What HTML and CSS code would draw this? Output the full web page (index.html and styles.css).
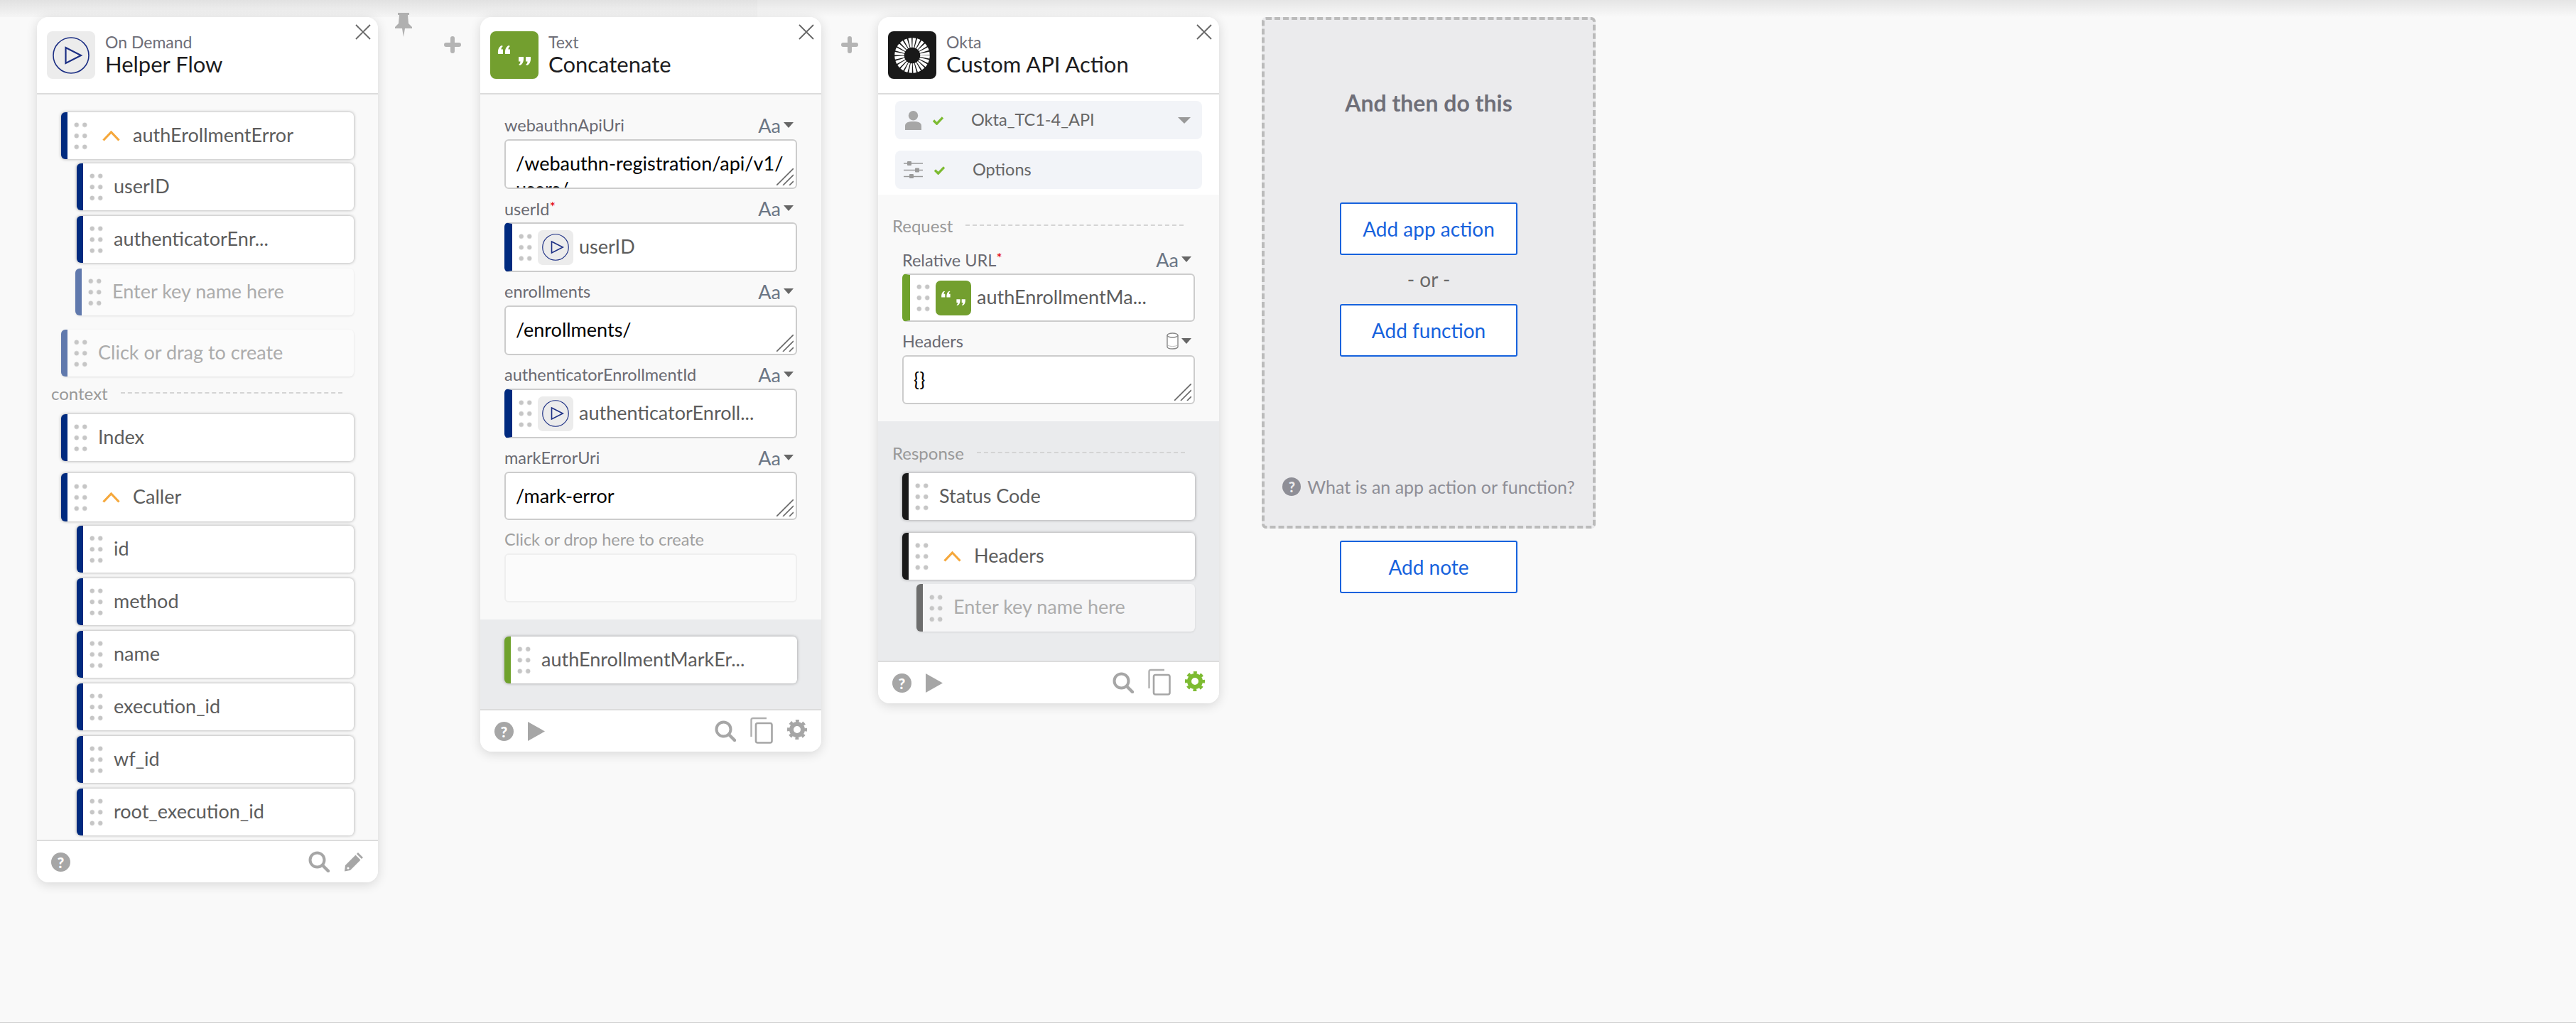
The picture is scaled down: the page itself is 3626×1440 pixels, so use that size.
FILE: index.html
```html
<!DOCTYPE html>
<html lang="en">
<head>
  <meta charset="UTF-8">
  <title>Flow Builder</title>
  <link rel="stylesheet" href="styles.css">
</head>
<body>
  <svg class="defs" width="0" height="0">
    <symbol id="i-play" viewBox="0 0 52 52">
      <circle cx="26" cy="26" r="25" fill="none" stroke="#1c2f84" stroke-width="1.6"/>
      <path d="M18.5 15 L40 26 L18.5 37 Z" fill="none" stroke="#1c2f84" stroke-width="2.2"/>
    </symbol>
    <symbol id="i-quote" viewBox="0 0 68 67">
      <path d="M16 20 C12 22 10.500 26 11 32 L18 32 L18 25.500 L15.500 25.500 C15.500 23.500 16.500 22 18 21 Z M26 20 C22 22 20.500 26 21 32 L28 32 L28 25.500 L25.500 25.500 C25.500 23.500 26.500 22 28 21 Z" fill="#fff"/>
      <path d="M46 48 C50 46 51.500 42 51 36 L44 36 L44 42.500 L46.500 42.500 C46.500 44.500 45.500 46 44 47 Z M56 48 C60 46 61.500 42 61 36 L54 36 L54 42.500 L56.500 42.500 C56.500 44.500 55.500 46 54 47 Z" fill="#fff" transform="translate(-4 0)"/>
    </symbol>
    <symbol id="i-close" viewBox="0 0 22 22">
      <path d="M1 1 L21 21 M21 1 L1 21" stroke="#666" stroke-width="1.8" fill="none"/>
    </symbol>
    <symbol id="i-plus" viewBox="0 0 24 24">
      <path d="M12 3 V21 M3 12 H21" stroke="#b4b4b4" stroke-width="6" stroke-linecap="round" fill="none"/>
    </symbol>
    <symbol id="i-pin" viewBox="0 0 24 34">
      <path d="M4 0 H20 V3 H18 L19 15 L24 20 V22 H14 L12 34 L10 22 H0 V20 L5 15 L6 3 H4 Z" fill="#b0b0b0"/>
    </symbol>
    <symbol id="i-search" viewBox="0 0 30 30">
      <circle cx="12.500" cy="12.500" r="10" fill="none" stroke="#a6a6a6" stroke-width="4"/>
      <path d="M20 20 L28 28" stroke="#a6a6a6" stroke-width="4.500" stroke-linecap="round"/>
    </symbol>
    <symbol id="i-pencil" viewBox="0 0 28 28">
      <path d="M20 1 L27 8 L25 10 L18 3 Z M16.500 4.500 L23.500 11.500 L9 26 L1 27.500 L2 19 Z" fill="#a6a6a6"/>
      <circle cx="6" cy="23" r="1.600" fill="#fff"/>
    </symbol>
    <symbol id="i-copy" viewBox="0 0 32 38">
      <path d="M23 2 H4 Q1.500 2 1.500 4.500 V28" fill="none" stroke="#b0b0b0" stroke-width="2.400"/>
      <rect x="8" y="9" width="22.500" height="27.500" rx="2.500" fill="#fff" stroke="#a6a6a6" stroke-width="2.600"/>
    </symbol>
    <symbol id="i-gear" viewBox="0 0 28 28">
      <circle cx="14" cy="14" r="8" fill="none" stroke="currentColor" stroke-width="6"/>
      <circle cx="14" cy="14" r="11.500" fill="none" stroke="currentColor" stroke-width="5" stroke-dasharray="4.600 4.430" stroke-dashoffset="2.300"/>
    </symbol>
    <symbol id="i-person" viewBox="0 0 24 28">
      <circle cx="12" cy="7" r="7" fill="#a6a6a6"/>
      <path d="M0 28 V22 C0 17 5 15.500 12 15.500 C19 15.500 24 17 24 22 V28 Z" fill="#a6a6a6"/>
    </symbol>
    <symbol id="i-check" viewBox="0 0 18 14">
      <path d="M2 7 L7 12 L16 2.500" fill="none" stroke="#7dbb32" stroke-width="3.600"/>
    </symbol>
    <symbol id="i-sliders" viewBox="0 0 27 24">
      <path d="M0 3 H27 M0 12.500 H27 M0 21.500 H27" stroke="#9a9a9a" stroke-width="1.400"/>
      <rect x="5" y="0" width="6" height="6" rx="1" fill="#9a9a9a"/>
      <rect x="16" y="9.500" width="6" height="6" rx="1" fill="#9a9a9a"/>
      <rect x="8" y="18" width="6" height="6" rx="1" fill="#9a9a9a"/>
    </symbol>
    <symbol id="i-db" viewBox="0 0 17 24">
      <path d="M1 4 V20 C1 24 16 24 16 20 V4" fill="#fff" stroke="#888" stroke-width="1.400"/>
      <ellipse cx="8.500" cy="4" rx="7.500" ry="3" fill="#fff" stroke="#888" stroke-width="1.400"/>
      <path d="M2 18 C4 20 13 20 15 18" fill="none" stroke="#bbb"/>
    </symbol>
    <symbol id="i-resize" viewBox="0 0 24 24">
      <path d="M0 24 L24 0 M9 24 L24 9 M18 24 L24 18" stroke="#666" stroke-width="1.600" fill="none"/>
    </symbol>
    <symbol id="i-chevron" viewBox="0 0 25 15">
      <path d="M1.500 13.500 L12.500 2 L23.500 13.500" fill="none" stroke="#f5a83c" stroke-width="3.200"/>
    </symbol>
  </svg>

  <main class="canvas">
    <!-- trigger card -->
    <section class="card">
      <header class="card-head">
        <span class="app-icon app-icon-flow"><svg class="play-big"><use href="#i-play"/></svg></span>
        <div class="card-titles">
          <div class="card-app">On Demand</div>
          <div class="card-name">Helper Flow</div>
        </div>
        <svg class="close"><use href="#i-close"/></svg>
      </header>
      <div class="card-body flow-body">
        <div class="pill parent"><span class="grip"></span><svg class="chevron"><use href="#i-chevron"/></svg><span class="val">authErollmentError</span></div>
        <div class="pill sub"><span class="grip"></span><span class="val">userID</span></div>
        <div class="pill sub"><span class="grip"></span><span class="val">authenticatorEnr...</span></div>
        <div class="pill sub ghost"><span class="grip"></span><span class="val">Enter key name here</span></div>
        <div class="pill ghost create"><span class="grip"></span><span class="val">Click or drag to create</span></div>
        <div class="divider context"><span>context</span><i></i></div>
        <div class="pill"><span class="grip"></span><span class="val">Index</span></div>
        <div class="pill parent caller"><span class="grip"></span><svg class="chevron"><use href="#i-chevron"/></svg><span class="val">Caller</span></div>
        <div class="pill sub"><span class="grip"></span><span class="val">id</span></div>
        <div class="pill sub"><span class="grip"></span><span class="val">method</span></div>
        <div class="pill sub"><span class="grip"></span><span class="val">name</span></div>
        <div class="pill sub"><span class="grip"></span><span class="val">execution_id</span></div>
        <div class="pill sub"><span class="grip"></span><span class="val">wf_id</span></div>
        <div class="pill sub"><span class="grip"></span><span class="val">root_execution_id</span></div>
      </div>
      <footer class="card-foot">
        <span class="help">?</span>
        <span class="spacer"></span>
        <svg class="tool"><use href="#i-search"/></svg>
        <svg class="tool pencil"><use href="#i-pencil"/></svg>
      </footer>
    </section>

    <div class="gutter gutter-first">
      <svg class="pin"><use href="#i-pin"/></svg>
      <svg class="plus plus-first"><use href="#i-plus"/></svg>
    </div>

    <!-- text function card -->
    <section class="card">
      <header class="card-head">
        <span class="app-icon app-icon-text"><svg class="quote-big"><use href="#i-quote"/></svg></span>
        <div class="card-titles">
          <div class="card-app">Text</div>
          <div class="card-name">Concatenate</div>
        </div>
        <svg class="close"><use href="#i-close"/></svg>
      </header>
      <div class="card-body inputs">
        <div class="field">
          <div class="field-label"><span>webauthnApiUri</span><span class="type">Aa<b class="caret"></b></span></div>
          <div class="textbox">/webauthn-registration/api/v1/ users/<svg class="resize"><use href="#i-resize"/></svg></div>
        </div>
        <div class="field">
          <div class="field-label"><span>userId<em>*</em></span><span class="type">Aa<b class="caret"></b></span></div>
          <div class="slot"><span class="grip"></span><span class="mini-icon"><svg class="play-small"><use href="#i-play"/></svg></span><span class="val">userID</span></div>
        </div>
        <div class="field">
          <div class="field-label"><span>enrollments</span><span class="type">Aa<b class="caret"></b></span></div>
          <div class="textbox">/enrollments/<svg class="resize"><use href="#i-resize"/></svg></div>
        </div>
        <div class="field">
          <div class="field-label"><span>authenticatorEnrollmentId</span><span class="type">Aa<b class="caret"></b></span></div>
          <div class="slot"><span class="grip"></span><span class="mini-icon"><svg class="play-small"><use href="#i-play"/></svg></span><span class="val">authenticatorEnroll...</span></div>
        </div>
        <div class="field">
          <div class="field-label"><span>markErrorUri</span><span class="type">Aa<b class="caret"></b></span></div>
          <div class="textbox textbox-short">/mark-error<svg class="resize"><use href="#i-resize"/></svg></div>
        </div>
        <div class="field-label drop-label"><span>Click or drop here to create</span></div>
        <div class="dropbox"></div>
      </div>
      <div class="outputs">
        <div class="pill green"><span class="grip"></span><span class="val">authEnrollmentMarkEr...</span></div>
      </div>
      <footer class="card-foot">
        <span class="help">?</span>
        <svg class="run"><path d="M0 0 L24 13.500 L0 27 Z" fill="#a6a6a6"/></svg>
        <span class="spacer"></span>
        <svg class="tool"><use href="#i-search"/></svg>
        <svg class="tool copy"><use href="#i-copy"/></svg>
        <svg class="tool gear"><use href="#i-gear"/></svg>
      </footer>
    </section>

    <div class="gutter gutter-second">
      <svg class="plus"><use href="#i-plus"/></svg>
    </div>

    <!-- okta action card -->
    <section class="card">
      <header class="card-head">
        <span class="app-icon app-icon-okta">
          <svg class="okta-mark" viewBox="0 0 68 68">
            <circle cx="34" cy="34" r="18" fill="none" stroke="#fff" stroke-width="13.500" stroke-dasharray="3.400 1.312"/>
          </svg>
        </span>
        <div class="card-titles">
          <div class="card-app">Okta</div>
          <div class="card-name">Custom API Action</div>
        </div>
        <svg class="close"><use href="#i-close"/></svg>
      </header>
      <div class="settings">
        <div class="setting">
          <svg class="person"><use href="#i-person"/></svg>
          <svg class="check"><use href="#i-check"/></svg>
          <span class="setting-name">Okta_TC1-4_API</span>
          <b class="caret caret-light"></b>
        </div>
        <div class="setting">
          <svg class="sliders"><use href="#i-sliders"/></svg>
          <svg class="check"><use href="#i-check"/></svg>
          <span class="setting-name">Options</span>
        </div>
      </div>
      <div class="request">
        <div class="divider"><span>Request</span><i></i></div>
        <div class="field">
          <div class="field-label"><span>Relative URL<em>*</em></span><span class="type">Aa<b class="caret"></b></span></div>
          <div class="slot slot-green"><span class="grip"></span><span class="mini-icon mini-text"><svg class="quote-small"><use href="#i-quote"/></svg></span><span class="val">authEnrollmentMa...</span></div>
        </div>
        <div class="field">
          <div class="field-label"><span>Headers</span><span class="type"><svg class="db"><use href="#i-db"/></svg><b class="caret"></b></span></div>
          <div class="textbox">{}<svg class="resize"><use href="#i-resize"/></svg></div>
        </div>
      </div>
      <div class="response">
        <div class="divider"><span>Response</span><i></i></div>
        <div class="pill black"><span class="grip"></span><span class="val">Status Code</span></div>
        <div class="pill black parent"><span class="grip"></span><svg class="chevron"><use href="#i-chevron"/></svg><span class="val">Headers</span></div>
        <div class="pill sub black ghost"><span class="grip"></span><span class="val">Enter key name here</span></div>
      </div>
      <footer class="card-foot">
        <span class="help">?</span>
        <svg class="run"><path d="M0 0 L24 13.500 L0 27 Z" fill="#a6a6a6"/></svg>
        <span class="spacer"></span>
        <svg class="tool"><use href="#i-search"/></svg>
        <svg class="tool copy"><use href="#i-copy"/></svg>
        <svg class="tool gear gear-on"><use href="#i-gear"/></svg>
      </footer>
    </section>

    <div class="gutter gutter-third"></div>

    <!-- next step -->
    <div class="next">
      <section class="next-panel">
        <h2>And then do this</h2>
        <button class="btn btn-app">Add app action</button>
        <div class="or">- or -</div>
        <button class="btn">Add function</button>
        <span class="spacer"></span>
        <div class="next-help"><span class="help help-small">?</span>What is an app action or function?</div>
      </section>
      <button class="btn btn-note">Add note</button>
    </div>
  </main>
</body>
</html>
```

FILE: styles.css
```css
* {
  box-sizing: border-box;
}

html, body {
  height: 100%;
}

body {
  margin: 0;
  overflow: hidden;
  font-family: "Lato", "Noto Sans", sans-serif;
  color: #5c5c5c;
  background-color: #f9f9f9;
  background-image: linear-gradient(rgba(0,0,0,0.015), rgba(0,0,0,0.015)), linear-gradient(#e5e5e5, #f9f9f9);
  background-size: 1066px 24px, 100% 24px;
  background-repeat: no-repeat;
  border-bottom: 1px solid #cfcfcf;
}

.defs {
  display: block;
  height: 0;
}

.canvas {
  display: flex;
  align-items: flex-start;
  padding: 24px 0 0 52px;
}

.spacer {
  flex: 1;
}

/* cards */
.card {
  width: 480px;
  flex: none;
  position: relative;
  background: #f9f9f9;
  border-radius: 16px;
  box-shadow: 0 3px 16px rgba(0,0,0,0.14);
  overflow: hidden;
}

.card-head {
  display: flex;
  align-items: flex-start;
  height: 109px;
  padding: 20px 0 0 14px;
  background: #fff;
  border-bottom: 2px solid #dcdcdc;
}

.app-icon {
  width: 68px;
  height: 67px;
  flex: none;
  border-radius: 8px;
  display: flex;
  align-items: center;
  justify-content: center;
}

.app-icon-flow {
  background: #ececec;
}

.app-icon-text {
  background: #739f2f;
}

.app-icon-okta {
  background: #191919;
}

.play-big {
  width: 52px;
  height: 52px;
}

.quote-big {
  width: 68px;
  height: 67px;
}

.okta-mark {
  width: 68px;
  height: 68px;
}

.card-titles {
  margin-left: 14px;
}

.card-app {
  font-size: 23px;
  line-height: 24px;
  margin-top: 3px;
  color: #6e6e78;
}

.card-name {
  font-size: 31px;
  line-height: 36px;
  margin-top: 1px;
  color: #1d1d21;
}

.close {
  position: absolute;
  top: 10px;
  right: 10px;
  width: 22px;
  height: 22px;
}

.card-foot {
  display: flex;
  align-items: center;
  height: 60px;
  padding: 0 20px;
  gap: 20px;
  background: #fff;
  border-top: 2px solid #dcdcdc;
}

.help {
  width: 27px;
  height: 27px;
  flex: none;
  border-radius: 50%;
  background: #a6a6a6;
  color: #fff;
  font-size: 21px;
  font-weight: 900;
  line-height: 27px;
  text-align: center;
}

.run {
  width: 24px;
  height: 27px;
}

.tool {
  width: 30px;
  height: 30px;
  flex: none;
}

.pencil {
  width: 28px;
  height: 28px;
}

.copy {
  width: 32px;
  height: 38px;
  margin-top: -2px;
}

.gear {
  width: 28px;
  height: 28px;
  color: #a6a6a6;
  margin-top: -4px;
}

.gear-on {
  color: #7dbb32;
}

/* draggable value pills */
.pill {
  display: flex;
  align-items: center;
  height: 66px;
  margin-bottom: 8px;
  padding-left: 7px;
  font-size: 27px;
  background: #fff;
  border-left: 9px solid #002a7f;
  border-radius: 6px;
  box-shadow: 0 0 4px rgba(0,0,0,0.35);
  white-space: nowrap;
}

.val {
  margin-top: -4px;
}

.grip {
  width: 23px;
  height: 46px;
  flex: none;
  margin-right: 13px;
  background-image: radial-gradient(circle, #c6c6c6 3px, transparent 3.6px);
  background-size: 11.5px 15.5px;
}

.chevron {
  width: 25px;
  height: 15px;
  flex: none;
  margin: 0 18px 0 6px;
}

.parent {
  margin-bottom: 6px;
}

.sub {
  margin-left: 22px;
}

.ghost {
  color: #acacac;
  background: #fbfbfb;
  border-left-color: #6079ad;
  box-shadow: 0 1px 3px rgba(0,0,0,0.1);
}

.ghost.sub {
  margin-left: 20px;
}

.create {
  margin-top: 20px;
  margin-bottom: 0;
}

.green {
  border-left-color: #6fa22c;
  margin: 0;
}

.black {
  border-left-color: #191919;
}

.ghost.black {
  border-left-color: #6d6d6d;
  background: #f6f6f7;
  margin-left: 20px;
}

.flow-body {
  padding: 25px 34px 6px;
}

.flow-body .pill:last-child {
  height: 66px;
  margin-bottom: 0;
}

.caller {
  margin-top: 17px;
  height: 68px;
}

/* dashed section titles */
.divider {
  display: flex;
  align-items: center;
  height: 28px;
  font-size: 24px;
  color: #999;
}

.divider i {
  flex: 1;
  margin-left: 18px;
  border-top: 2px dashed #d4d4d4;
}

.context {
  margin: 9px 16px 16px -14px;
}

/* inputs */
.inputs {
  padding: 28px 34px 24px;
}

.field {
  margin-bottom: 12px;
}

.field-label {
  display: flex;
  align-items: center;
  justify-content: space-between;
  height: 30px;
  margin-bottom: 5px;
  font-size: 23.5px;
  color: #6a6a72;
}

.field-label em {
  color: #e3000f;
  font-style: normal;
  font-size: 20px;
  vertical-align: 5px;
}

.type {
  display: flex;
  align-items: center;
  font-size: 27px;
  color: #6b7685;
  padding-right: 5px;
}

.caret {
  width: 0;
  height: 0;
  margin-left: 4px;
  border: 7px solid transparent;
  border-top: 8px solid #666;
  border-bottom: 0;
}

.caret-light {
  border-width: 9px;
  border-top-color: #999;
  border-bottom: 0;
  margin-right: 16px;
}

.textbox {
  position: relative;
  height: 70px;
  padding: 14px 14px 0;
  overflow: hidden;
  font-size: 27px;
  line-height: 36px;
  color: #000;
  background: #fff;
  border: 2px solid #ccc;
  border-radius: 6px;
}

.textbox-short {
  height: 68px;
}

.resize {
  position: absolute;
  right: 3px;
  bottom: 3px;
  width: 24px;
  height: 24px;
}

.slot {
  display: flex;
  align-items: center;
  height: 70px;
  padding-left: 7px;
  font-size: 27px;
  background: #fff;
  border: 2px solid #ccc;
  border-left: 11px solid #002a7f;
  border-radius: 6px;
  white-space: nowrap;
}

.slot .grip {
  margin-right: 0;
}

.slot-green {
  border-left-color: #6fa22c;
}

.mini-icon {
  width: 50px;
  height: 49px;
  flex: none;
  margin: 0 8px 0 6px;
  display: flex;
  align-items: center;
  justify-content: center;
  background: #ececec;
  border-radius: 7px;
}

.mini-text {
  background: #739f2f;
}

.play-small {
  width: 38px;
  height: 38px;
}

.quote-small {
  width: 50px;
  height: 49px;
}

.drop-label {
  margin-top: 1px;
  color: #a0a0a0;
}

.dropbox {
  height: 69px;
  background: #fbfbfb;
  border: 2px solid #efefef;
  border-radius: 6px;
}

.outputs {
  height: 126px;
  padding: 24px 34px 0;
  background: #eaebed;
}

/* okta card sections */
.settings {
  display: flex;
  flex-direction: column;
  gap: 16px;
  height: 141px;
  padding: 9px 24px 0;
  background: #fff;
}

.setting {
  display: flex;
  align-items: center;
  height: 54px;
  font-size: 23.5px;
  background: #f2f4f8;
  border-radius: 8px;
  color: #666;
}

.person {
  width: 23px;
  height: 27px;
  margin-left: 14px;
}

.sliders {
  width: 27px;
  height: 24px;
  margin-left: 12px;
}

.check {
  width: 17px;
  height: 13px;
  margin-left: 15px;
}

.setting-name {
  flex: 1;
  margin: -3px 0 0 38px;
}

.request {
  height: 319px;
  padding: 29px 36px 0 20px;
}

.request .divider i,
.response .divider i {
  margin-right: 14px;
}

.request .divider {
  margin-bottom: 19px;
}

.request .field {
  margin-left: 14px;
  margin-right: -2px;
  margin-bottom: 12px;
}

.request .slot {
  height: 68px;
}

.request .textbox {
  height: 69px;
}

.db {
  width: 17px;
  height: 24px;
}

.response {
  height: 337px;
  padding: 30px 34px 0 20px;
  background: #eaebed;
}

.response .divider {
  margin-bottom: 15px;
}

.response .pill {
  margin-left: 14px;
}

.response .pill:nth-child(2) {
  margin-bottom: 18px;
}

.response .ghost {
  margin-left: 34px;
  height: 67px;
}

/* gutters between cards */
.gutter {
  display: flex;
  align-items: flex-start;
  flex: none;
}

.gutter-first {
  width: 144px;
  padding-left: 24px;
}

.gutter-second {
  width: 80px;
  padding-left: 28px;
}

.gutter-third {
  width: 60px;
}

.pin {
  width: 24px;
  height: 34px;
  margin-top: -6px;
}

.plus {
  width: 24px;
  height: 24px;
  margin-top: 27px;
}

.plus-first {
  margin-left: 45px;
}

/* next step panel */
.next {
  width: 470px;
  display: flex;
  flex-direction: column;
  align-items: center;
}

.next-panel {
  width: 470px;
  height: 720px;
  display: flex;
  flex-direction: column;
  align-items: center;
  padding: 0 8px 40px;
  background: #ebebed;
  border: 4px dashed #bbb;
  border-radius: 6px;
}

.next-panel h2 {
  margin: 98px 0 0;
  font-size: 32px;
  line-height: 38px;
  font-weight: 700;
  color: #6e6e78;
}

.btn {
  width: 250px;
  height: 74px;
  flex: none;
  font-family: inherit;
  font-size: 28px;
  color: #1662dd;
  background: #fff;
  border: 2px solid #1662dd;
  border-radius: 3px;
  padding: 0;
}

.btn-app {
  margin-top: 121px;
}

.or {
  margin: 17px 0 18px;
  font-size: 28px;
  line-height: 34px;
  color: #6a6a6a;
}

.next-help {
  display: flex;
  align-items: center;
  gap: 9px;
  font-size: 25px;
  white-space: nowrap;
  color: #8e8e96;
}

.help-small {
  width: 26px;
  height: 26px;
  font-size: 20px;
  line-height: 26px;
  background: #8e8e96;
  color: #ebebed;
}

.btn-note {
  margin-top: 17px;
}
```
